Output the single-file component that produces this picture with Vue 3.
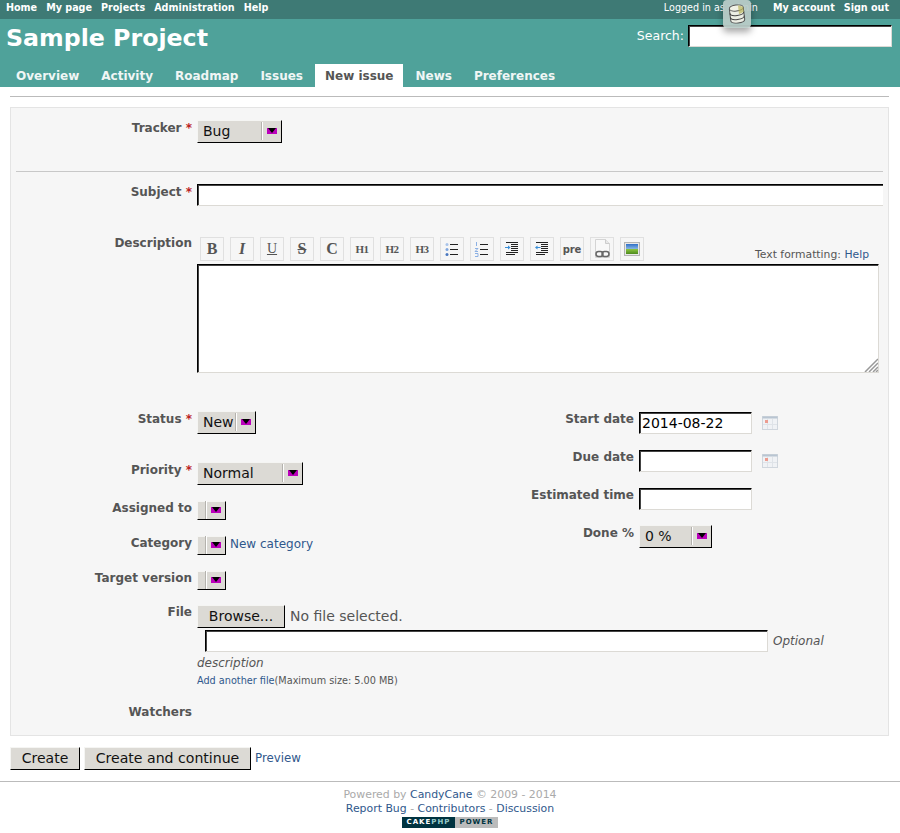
<template>
  <div class="page">
    <div class="top-menu">
      <ul class="top-links">
        <li v-for="item in topLinks" :key="item">{{ item }}</li>
      </ul>
      <div class="top-right">
        <span class="logged">Logged in as <b>admin</b></span>
        <span class="top-link">My account</span>
        <span class="top-link">Sign out</span>
      </div>
    </div>

    <div class="header">
      <div class="header-row">
        <h1>Sample Project</h1>
        <div class="search">
          <span>Search:</span>
          <input class="search-input" type="text" />
        </div>
      </div>
      <ul class="tabs">
        <li v-for="tab in tabs" :key="tab" :class="{ selected: tab === 'New issue' }">{{ tab }}</li>
      </ul>
    </div>

    <!-- debug kit style floating button -->
    <div class="debug-btn">
      <svg width="18" height="20" viewBox="0 0 18 20">
        <g transform="rotate(-7 9 10)">
          <path d="M2 4v12c0 2 3 3 7 3s7-1 7-3V4" fill="#eceee4" stroke="#555" />
          <path d="M2 8.500c0 2 3 3 7 3s7-1 7-3M2 12.500c0 2 3 3 7 3s7-1 7-3" fill="none" stroke="#444" />
          <ellipse cx="9" cy="4" rx="7" ry="3" fill="#f1f2e6" stroke="#555" />
          <path d="M11 1.500l5 2v5l-5 2z" fill="#b9b55a" opacity="0.7" />
        </g>
      </svg>
    </div>

    <div class="content">
      <div class="rule"></div>
      <div class="box">
        <div class="row tracker-row">
          <label>Tracker <em>*</em></label>
          <div class="select tracker-select"><span>Bug</span><i class="sep"></i><i class="arrow"></i></div>
        </div>
        <div class="divider"></div>

        <div class="row subject-row">
          <label>Subject <em>*</em></label>
          <input class="text subject" type="text" />
        </div>

        <div class="row desc-row">
          <label>Description</label>
          <div class="desc-col">
            <div class="toolbar-row">
              <div class="toolbar">
                <span v-for="btn in textButtons" :key="btn.label" class="tb" :class="btn.cls">{{ btn.label }}</span>
                <span class="tb">
                  <svg width="16" height="16" viewBox="0 0 16 16">
                    <circle cx="3" cy="3.500" r="1.500" fill="#a9c4ea" /><circle cx="3" cy="8.500" r="1.500" fill="#7fa6de" /><circle cx="3" cy="13.500" r="1.500" fill="#4a78c0" />
                    <path d="M6 3.500h8M6 8.500h8M6 13.500h8" stroke="#222" />
                  </svg>
                </span>
                <span class="tb">
                  <svg width="16" height="16" viewBox="0 0 16 16">
                    <path d="M2.500 1v4M1 7.500h3L1 10.500h3M1 12.500h3v3H1" fill="none" stroke="#8db1e4" />
                    <path d="M6 3.500h8M6 8.500h8M6 13.500h8" stroke="#222" />
                  </svg>
                </span>
                <span class="tb">
                  <svg width="16" height="16" viewBox="0 0 16 16">
                    <path d="M2 1.500h12M7 3.500h7M7 5.500h7M7 7.500h7M7 9.500h7M2 11.500h12M2 13.500h9" stroke="#222" />
                    <path d="M1 6.500h4" stroke="#3a8fd8" />
                    <path d="M4 4.500l2.500 2-2.500 2z" fill="#3a8fd8" />
                  </svg>
                </span>
                <span class="tb">
                  <svg width="16" height="16" viewBox="0 0 16 16">
                    <path d="M2 1.500h12M7 3.500h7M7 5.500h7M7 7.500h7M7 9.500h7M2 11.500h12M2 13.500h9" stroke="#222" />
                    <path d="M2.500 6.500h4" stroke="#3a8fd8" />
                    <path d="M3.500 4.500L1 6.500l2.500 2z" fill="#3a8fd8" />
                  </svg>
                </span>
                <span class="tb pre">pre</span>
                <span class="tb">
                  <svg width="19" height="20" viewBox="0 0 19 20">
                    <path d="M2.500 0.500h10l4 4v14h-14z" fill="#f8f8f8" stroke="#d4d4d4" />
                    <path d="M12.500 0.500v4h4" fill="#e8e8e8" stroke="#ccc" />
                    <rect x="3" y="12.500" width="7" height="5" rx="2.500" fill="none" stroke="#666" stroke-width="1.500" />
                    <rect x="9" y="12.500" width="7" height="5" rx="2.500" fill="none" stroke="#666" stroke-width="1.500" />
                  </svg>
                </span>
                <span class="tb">
                  <svg width="16" height="14" viewBox="0 0 16 14">
                    <defs>
                      <linearGradient id="pic-sky" x1="0" y1="0" x2="0" y2="1">
                        <stop offset="0" stop-color="#2f6fc8" />
                        <stop offset="0.45" stop-color="#7fb0e0" />
                        <stop offset="0.5" stop-color="#8cc63f" />
                        <stop offset="1" stop-color="#4d8a1e" />
                      </linearGradient>
                    </defs>
                    <rect x="0.500" y="0.500" width="15" height="13" fill="#e8e8e8" stroke="#b4b4b4" />
                    <rect x="2" y="2" width="12" height="10" fill="url(#pic-sky)" />
                  </svg>
                </span>
              </div>
              <span class="formatting">Text formatting: <a>Help</a></span>
            </div>
            <div class="textarea">
              <svg class="grip" width="14" height="14" viewBox="0 0 14 14">
                <path d="M1 14L14 1M5 14L14 5M9 14l5-5M12 14l2-2" stroke="#999" stroke-width="1.500" fill="none" />
              </svg>
            </div>
          </div>
        </div>

        <div class="columns">
          <div class="col">
            <div class="row field status-row">
              <label>Status <em>*</em></label>
              <div class="select status-select"><span>New</span><i class="sep"></i><i class="arrow"></i></div>
            </div>
            <div class="row field">
              <label>Priority <em>*</em></label>
              <div class="select priority-select"><span>Normal</span><i class="sep"></i><i class="arrow"></i></div>
            </div>
            <div class="row field short">
              <label>Assigned to</label>
              <div class="select empty"><i class="sep"></i><i class="arrow"></i></div>
            </div>
            <div class="row field short">
              <label>Category</label>
              <div class="select empty"><i class="sep"></i><i class="arrow"></i></div>
              <a class="new-cat">New category</a>
            </div>
            <div class="row field short">
              <label>Target version</label>
              <div class="select empty"><i class="sep"></i><i class="arrow"></i></div>
            </div>
          </div>
          <div class="col right-col">
            <div class="row field">
              <label>Start date</label>
              <input class="text date" type="text" value="2014-08-22" />
              <svg class="cal" width="16" height="14" viewBox="0 0 16 14">
                <rect x="0.500" y="0.500" width="15" height="13" fill="#f0f2f5" stroke="#d0d6dd" />
                <rect x="0.500" y="0.500" width="15" height="2" fill="#b9c5d2" />
                <path d="M5.500 3v10M10.500 3v10M1 8.500h14" stroke="#dfe3e8" />
                <rect x="3" y="4" width="3" height="3" fill="#ec9c90" />
              </svg>
            </div>
            <div class="row field">
              <label>Due date</label>
              <input class="text date" type="text" />
              <svg class="cal" width="16" height="14" viewBox="0 0 16 14">
                <rect x="0.500" y="0.500" width="15" height="13" fill="#f0f2f5" stroke="#d0d6dd" />
                <rect x="0.500" y="0.500" width="15" height="2" fill="#b9c5d2" />
                <path d="M5.500 3v10M10.500 3v10M1 8.500h14" stroke="#dfe3e8" />
                <rect x="3" y="4" width="3" height="3" fill="#ec9c90" />
              </svg>
            </div>
            <div class="row field">
              <label>Estimated time</label>
              <input class="text date" type="text" />
            </div>
            <div class="row field done-row">
              <label>Done %</label>
              <div class="select done-select"><span>0 %</span><i class="sep"></i><i class="arrow"></i></div>
            </div>
          </div>
        </div>

        <div class="row file-row">
          <label>File</label>
          <div class="file-col">
            <div class="file-line">
              <span class="btn browse">Browse...</span>
              <span class="no-file">No file selected.</span>
            </div>
            <div class="optional">
              <input class="text file-desc" type="text" />
              <i>Optional</i>
            </div>
            <i class="desc-word">description</i>
            <div class="add-file"><a>Add another file</a>(Maximum size: 5.00 MB)</div>
          </div>
        </div>

        <div class="row watchers-row">
          <label>Watchers</label>
        </div>
      </div>

      <div class="actions">
        <span class="btn">Create</span>
        <span class="btn">Create and continue</span>
        <a class="preview">Preview</a>
      </div>
    </div>

    <div class="footer">
      <div class="powered">Powered by <a>CandyCane</a> © 2009 - 2014</div>
      <div class="foot-links"><a>Report Bug</a> - <a>Contributors</a> - <a>Discussion</a></div>
      <div class="badge"><span class="cake">CAKE<b>PHP</b></span><span class="power">POWER</span></div>
    </div>
  </div>
</template>

<script setup>
const topLinks = ['Home', 'My page', 'Projects', 'Administration', 'Help']
const tabs = ['Overview', 'Activity', 'Roadmap', 'Issues', 'New issue', 'News', 'Preferences']
const textButtons = [
  { label: 'B', cls: 'serif bold big' },
  { label: 'I', cls: 'serif bold ital big' },
  { label: 'U', cls: 'serif under' },
  { label: 'S', cls: 'serif bold strike big' },
  { label: 'C', cls: 'serif bold big' },
  { label: 'H1', cls: 'serif bold small' },
  { label: 'H2', cls: 'serif bold small' },
  { label: 'H3', cls: 'serif bold small' },
]
</script>

<style>
html, body {
  margin: 0;
  background: #fff;
}
</style>

<style scoped>
.page {
  position: relative;
  width: 900px;
  height: 833px;
  overflow: hidden;
  font-family: "DejaVu Sans", sans-serif;
  font-size: 12px;
  color: #484848;
}

a {
  color: #30588c;
}

.top-menu {
  display: flex;
  justify-content: space-between;
  height: 19px;
  padding: 0 11px 0 6px;
  background: #3e7a75;
  color: #fff;
  font-size: 9.6px;
  line-height: 15px;
}

.top-links {
  display: flex;
  gap: 9px;
  margin: 0;
  padding: 0;
  list-style: none;
  font-weight: bold;
}

.top-right {
  display: flex;
  gap: 9px;
}

.logged {
  margin-right: 6px;
}

.logged b {
  font-weight: normal;
}

.top-link {
  font-weight: bold;
}

.header {
  height: 68px;
  background: #4fa29a;
  color: #fff;
}

.header-row {
  display: flex;
  justify-content: space-between;
  height: 45px;
  padding: 0 8px 0 6px;
}

h1 {
  margin: 0;
  font-size: 23.7px;
  line-height: 38px;
}

.search {
  display: flex;
  align-items: flex-start;
  gap: 4px;
  padding-top: 6px;
  font-size: 12.5px;
  line-height: 21px;
}

.search-input {
  box-sizing: border-box;
  width: 204px;
  height: 22px;
  border: 1px solid;
  border-color: #000 #dcdad5 #dcdad5 #000;
  background: #fff;
  box-shadow: inset 1px 1px 0 #444;
  outline: none;
}

.tabs {
  display: flex;
  gap: 2px;
  margin: 0;
  padding: 0 0 0 6px;
  list-style: none;
  font-size: 12px;
  font-weight: bold;
  line-height: 24px;
}

.tabs li {
  height: 23px;
  padding: 0 10px;
  color: #f0f6f5;
}

.tabs li.selected {
  background: #fff;
  color: #555;
}

.debug-btn {
  position: absolute;
  top: 0;
  left: 723px;
  display: flex;
  align-items: center;
  justify-content: center;
  width: 28px;
  height: 28px;
  border-radius: 4px;
  background: rgba(186, 204, 200, 0.94);
  box-shadow: 0 4px 7px rgba(0, 0, 0, 0.35);
}

.content {
  padding: 0 11px 0 10px;
}

.rule {
  height: 1px;
  margin: 9px 0 10px;
  background: #bbb;
}

.box {
  box-sizing: border-box;
  height: 629px;
  padding: 12px 5px 0 0;
  border: 1px solid #e4e4e4;
  background: #f6f6f6;
}

.row {
  display: flex;
  align-items: flex-start;
}

.row label {
  flex: none;
  box-sizing: border-box;
  width: 186px;
  padding: 1px 5px 0 0;
  color: #555;
  font-weight: bold;
  text-align: right;
  line-height: 14px;
}

.row label em {
  color: #b22;
  font-style: normal;
}

.select {
  display: flex;
  align-items: center;
  box-sizing: border-box;
  height: 23px;
  padding: 0 4px 1px 5px;
  border: 1px solid;
  border-color: #f5f5f3 #000 #000 #f5f5f3;
  background: #dcdad5;
  color: #111;
  font-size: 14px;
}

.select span {
  flex: 1;
  margin-top: -1px;
}

.select .sep {
  width: 1px;
  height: 18px;
  margin-right: 4px;
  border-right: 1px solid #fff;
  background: #b4b2ad;
}

.select .arrow {
  position: relative;
  width: 10px;
  height: 6px;
  background: #b0b;
}

.select .arrow::after {
  content: "";
  position: absolute;
  top: 0;
  left: 1px;
  border-top: 5px solid #000;
  border-left: 4px solid transparent;
  border-right: 4px solid transparent;
}

.tracker-select { width: 85px; }
.status-select { width: 59px; }
.priority-select { width: 106px; }
.done-select { width: 73px; }
.empty { width: 29px; height: 19px; justify-content: flex-end; }

.tracker-row {
  height: 51px;
}

.divider {
  height: 1px;
  margin: 0 0 12px 5px;
  background: #c8c8c8;
}

.text {
  box-sizing: border-box;
  border: 1px solid;
  border-color: #000 #dcdad5 #dcdad5 #000;
  background: #fff;
  box-shadow: inset 1px 1px 0 #444;
  font-family: inherit;
  font-size: 14px;
  padding: 1px 2px;
  outline: none;
}

.subject {
  width: 686px;
  height: 22px;
  border-right: none;
}

.subject-row {
  height: 53px;
}

.row.desc-row label {
  margin-top: -1px;
  padding-top: 0;
}

.desc-col {
  width: 682px;
  height: 174px;
}

.toolbar-row {
  display: flex;
  justify-content: space-between;
  align-items: flex-start;
  height: 27px;
  padding-left: 3px;
}

.toolbar {
  display: flex;
  gap: 6px;
}

.tb {
  display: flex;
  align-items: center;
  justify-content: center;
  box-sizing: border-box;
  width: 24px;
  height: 24px;
  border: 1px solid #e0e0e0;
  color: #555;
  font-size: 14px;
}

.serif { font-family: "Liberation Serif", serif; }
.bold { font-weight: bold; }
.ital { font-style: italic; }
.under { text-decoration: underline; }
.strike { text-decoration: line-through; }
.big { font-size: 16px; }
.small { font-size: 11px; letter-spacing: -0.5px; }
.pre { font-size: 10px; font-weight: bold; letter-spacing: -0.2px; }

.formatting {
  align-self: flex-end;
  padding: 0 10px 3px 0;
  font-size: 10.8px;
  color: #555;
}

.textarea {
  position: relative;
  box-sizing: border-box;
  height: 109px;
  border: 1px solid;
  border-color: #000 #dcdad5 #dcdad5 #000;
  background: #fff;
  box-shadow: inset 1px 1px 0 #444;
}

.grip {
  position: absolute;
  right: 0;
  bottom: 0;
}

.columns {
  display: flex;
}

.col {
  flex: none;
  width: 442px;
}

.field {
  margin-bottom: 16px;
}

.status-row {
  margin-bottom: 28px;
}

.row.short label {
  padding-top: 0;
}

.right-col .field {
  margin-top: 1px;
  margin-bottom: 16px;
}

.right-col .row.field label {
  padding-top: 0;
}

.right-col .row.done-row {
  margin-top: -1px;
}

.right-col .row.done-row label {
  padding-top: 1px;
}

.date {
  width: 113px;
  height: 22px;
}

.cal {
  margin: 4px 0 0 10px;
}

.new-cat {
  margin: 1px 0 0 4px;
}

.file-row {
  height: 95px;
  margin-top: -1px;
}

.row.file-row label {
  padding-top: 0;
}

.file-col {
  flex: 1;
}

.file-line {
  display: flex;
  align-items: flex-start;
  gap: 5px;
  height: 25px;
}

.btn {
  display: inline-flex;
  align-items: center;
  justify-content: center;
  box-sizing: border-box;
  height: 23px;
  padding-bottom: 1px;
  border: 1px solid;
  border-color: #f5f5f3 #000 #000 #f5f5f3;
  background: #dcdad5;
  color: #111;
  font-size: 14px;
}

.browse { width: 88px; }

.no-file {
  font-size: 14px;
  line-height: 22px;
  color: #555;
}

.optional {
  display: flex;
  align-items: center;
  gap: 5px;
  padding-left: 8px;
  font-size: 12px;
  color: #555;
}

.file-desc {
  width: 563px;
  height: 22px;
}

.desc-word {
  display: block;
  margin-top: 4px;
  line-height: 15px;
  color: #555;
}

.add-file {
  margin-top: 2px;
  font-size: 9.7px;
  line-height: 15px;
  color: #555;
}

.watchers-row {
  margin-top: 4px;
}

.actions {
  display: flex;
  align-items: center;
  gap: 4px;
  margin-top: 11px;
}

.actions .btn:nth-child(1) { width: 70px; }
.actions .btn:nth-child(2) { width: 167px; font-size: 14.1px; }

.preview {
  margin: -1px 0 0;
  font-size: 11.8px;
}

.footer {
  position: absolute;
  left: 0;
  right: 0;
  top: 781px;
  padding-top: 6px;
  border-top: 1px solid #bbb;
  text-align: center;
  font-size: 10.9px;
  line-height: 14px;
  color: #aaa;
}

.badge {
  display: flex;
  justify-content: center;
  margin-top: 1px;
  font-size: 7px;
  line-height: 11px;
  font-weight: bold;
  letter-spacing: 1px;
}

.cake {
  width: 53px;
  background: #003340;
  color: #fff;
}

.cake b {
  color: #9cc;
}

.power {
  width: 43px;
  background: #bbb;
  color: #003340;
}
</style>
